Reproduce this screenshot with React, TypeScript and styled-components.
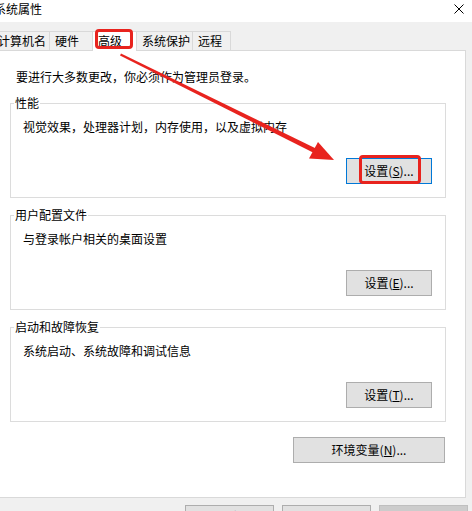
import React from "react";
import styled, { createGlobalStyle } from "styled-components";

const GlobalStyle = createGlobalStyle`
  html, body { margin: 0; padding: 0; background: #fff; }
  body {
    font-family: "Noto Sans CJK SC", "Microsoft YaHei", sans-serif;
    font-size: 12px;
    color: #000;
  }
`;

const Window = styled.div`
  position: relative;
  width: 472px;
  height: 511px;
  overflow: hidden;
  background: #f0f0f0;
  display: flex;
  flex-direction: column;
`;

const TitleBar = styled.div`
  flex: none;
  height: 22px;
  background: #fff;
  display: flex;
  align-items: flex-start;
  justify-content: space-between;
  padding-right: 8px;
`;

const Title = styled.span`
  margin-left: -6px;
  line-height: 17px;
  white-space: nowrap;
`;

const CloseButton = styled.div`
  width: 10px;
  height: 17px;
  display: flex;
  align-items: center;
  justify-content: center;
`;

const TabStrip = styled.div`
  flex: none;
  height: 28px;
  display: flex;
  align-items: flex-end;
  margin-left: -7px;
`;

const Tab = styled.div<{ $w: number; $active?: boolean }>`
  box-sizing: border-box;
  width: ${(p) => p.$w}px;
  height: ${(p) => (p.$active ? 20 : 19)}px;
  margin-left: -1px;
  padding-left: 5px;
  border: 1px solid #d9d9d9;
  border-bottom: none;
  background: ${(p) => (p.$active ? "#fff" : "#f0f0f0")};
  line-height: 18px;
  white-space: nowrap;
  position: relative;
  z-index: ${(p) => (p.$active ? 2 : 0)};
  margin-bottom: ${(p) => (p.$active ? -1 : 0)}px;
`;

const Panel = styled.div`
  flex: none;
  box-sizing: border-box;
  width: 473px;
  height: 448px;
  margin-left: -7px;
  border: 1px solid #d9d9d9;
  background: #fff;
  padding: 18px 19px 0 16px;
  display: flex;
  flex-direction: column;
`;

const Notice = styled.p`
  margin: 0;
  padding-left: 6px;
  line-height: 16px;
`;

const GroupBox = styled.fieldset<{ $gap: number }>`
  margin: ${(p) => p.$gap}px 0 0;
  padding: 8px 13px 13px 12px;
  border: 1px solid #dcdcdc;
  min-width: 0;
`;

const GroupLabel = styled.legend`
  margin-left: -9px;
  padding: 0 1px;
  line-height: 16px;
  font-size: 12px;
`;

const Description = styled.div`
  line-height: 16px;
`;

const ButtonRow = styled.div<{ $top: number; $right?: number }>`
  display: flex;
  justify-content: flex-end;
  margin-top: ${(p) => p.$top}px;
  margin-right: ${(p) => p.$right ?? 0}px;
`;

const DialogButton = styled.button<{ $w: number; $h?: number; $focused?: boolean }>`
  box-sizing: border-box;
  width: ${(p) => p.$w}px;
  height: ${(p) => p.$h ?? 26}px;
  padding: 0;
  border: 1px solid ${(p) => (p.$focused ? "#0078d7" : "#adadad")};
  background: #e1e1e1;
  font-family: inherit;
  font-size: 12px;
  color: #000;
  line-height: 16px;
  &:disabled {
    background: #cccccc;
    border-color: #bfbfbf;
    color: #838383;
  }
`;

const Key = styled.span`
  text-decoration: underline;
`;

const Footer = styled.div`
  flex: none;
  display: flex;
  justify-content: flex-end;
  gap: 8px;
  padding: 7px 4px 0 0;
`;

/* red call-out frames drawn on top of the dialog */
const Highlight = styled.div<{ $x: number; $y: number; $w: number; $h: number }>`
  position: absolute;
  z-index: 10;
  left: ${(p) => p.$x}px;
  top: ${(p) => p.$y}px;
  width: ${(p) => p.$w}px;
  height: ${(p) => p.$h}px;
  box-sizing: border-box;
  border: 3px solid #e8231e;
  border-radius: 4px;
  pointer-events: none;
`;

const ArrowLayer = styled.svg`
  position: absolute;
  z-index: 10;
  left: 0;
  top: 0;
  pointer-events: none;
`;

const tabs = [
  { label: "计算机名", w: 58 },
  { label: "硬件", w: 44 },
  { label: "高级", w: 45, active: true },
  { label: "系统保护", w: 57 },
  { label: "远程", w: 39 },
];

type Group = { title: string; text: string; key: string; focused?: boolean; gap: number };

const groups: Group[] = [
  { title: "性能", text: "视觉效果，处理器计划，内存使用，以及虚拟内存", key: "S", focused: true, gap: 10 },
  { title: "用户配置文件", text: "与登录帐户相关的桌面设置", key: "E", gap: 9 },
  { title: "启动和故障恢复", text: "系统启动、系统故障和调试信息", key: "T", gap: 9 },
];

export default function App() {
  return (
    <>
      <GlobalStyle />
      <Window>
        <TitleBar>
          <Title>系统属性</Title>
          <CloseButton>
            <svg width="10" height="10" viewBox="0 0 10 10">
              <path d="M0.5 0.5 L9.5 9.5 M9.5 0.5 L0.5 9.5" stroke="#000" strokeWidth="1" fill="none" />
            </svg>
          </CloseButton>
        </TitleBar>

        <TabStrip>
          {tabs.map((t) => (
            <Tab key={t.label} $w={t.w} $active={t.active}>
              {t.label}
            </Tab>
          ))}
        </TabStrip>

        <Panel>
          <Notice>要进行大多数更改，你必须作为管理员登录。</Notice>
          {groups.map((g) => (
            <GroupBox key={g.title} $gap={g.gap}>
              <GroupLabel>{g.title}</GroupLabel>
              <Description>{g.text}</Description>
              <ButtonRow $top={23}>
                <DialogButton $w={86} $focused={g.focused}>
                  设置(<Key>{g.key}</Key>)...
                </DialogButton>
              </ButtonRow>
            </GroupBox>
          ))}
          <ButtonRow $top={15} $right={1}>
            <DialogButton $w={152}>
              环境变量(<Key>N</Key>)...
            </DialogButton>
          </ButtonRow>
        </Panel>

        <Footer>
          <DialogButton $w={89} $h={23}>确定</DialogButton>
          <DialogButton $w={89} $h={23}>取消</DialogButton>
          <DialogButton $w={89} $h={23} disabled>
            应用(A)
          </DialogButton>
        </Footer>

        <Highlight $x={95} $y={29} $w={38} $h={20} />
        <Highlight $x={359} $y={155} $w={62} $h={29} />
        <ArrowLayer width="472" height="511" viewBox="0 0 472 511">
          <polygon points="120,55.5 121,53.5 318,149.5 316,154" fill="#e8231e" />
          <polygon points="334,160 309,158.5 318,142" fill="#e8231e" />
        </ArrowLayer>
      </Window>
    </>
  );
}
